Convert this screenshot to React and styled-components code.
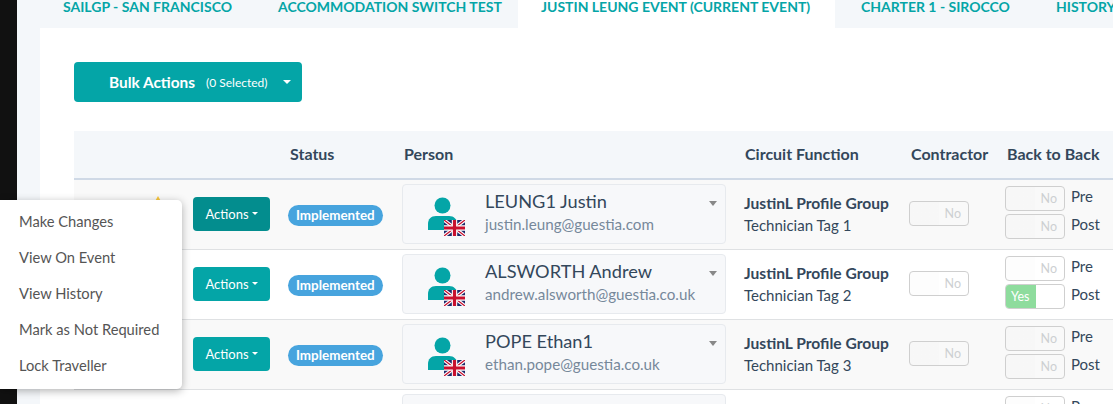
import React from "react";
import styled, { createGlobalStyle } from "styled-components";

const GlobalStyle = createGlobalStyle`
  html, body {
    margin: 0;
    height: 404px;
    overflow: hidden;
    background: #f4f7fa;
    font-family: "Lato", "Noto Sans", sans-serif;
  }
`;

const Page = styled.div`
  position: relative;
  display: flex;
  width: 1113px;
  height: 404px;
  overflow: hidden;
`;

const SideStrip = styled.div`
  flex: 0 0 17px;
  background: #111;
`;

const Main = styled.div`
  flex: 1;
  min-width: 0;
  background: #f4f7fa;
`;

const Tabs = styled.div`
  display: flex;
  height: 28px;
  padding-left: 25px;
  white-space: nowrap;
`;

const Tab = styled.div`
  flex: 0 0 ${(props) => props.$width}px;
  padding-left: ${(props) => props.$pad}px;
  box-sizing: border-box;
  background: ${(props) => (props.$active ? "#fff" : "transparent")};
  color: #04a5a7;
  font-size: 14px;
  font-weight: 700;
  line-height: 14px;
`;

const Panel = styled.div`
  margin-left: 23px;
  height: 376px;
  background: #fff;
  padding: 34px 0 0 34px;
  box-sizing: border-box;
`;

const BulkButton = styled.div`
  display: flex;
  align-items: center;
  width: 228px;
  height: 40px;
  box-sizing: border-box;
  padding-left: 35px;
  border-radius: 4px;
  background: #04a5a7;
  color: #fff;
`;

const BulkLabel = styled.span`
  font-size: 15.4px;
  font-weight: 700;
`;

const BulkCount = styled.span`
  margin-left: 11px;
  font-size: 12px;
`;

const BulkCaret = styled.span`
  margin-left: 15px;
  width: 0;
  height: 0;
  border-left: 4px solid transparent;
  border-right: 4px solid transparent;
  border-top: 4px solid #fff;
`;

const Table = styled.div`
  margin-top: 29px;
  width: 1039px;
`;

const Columns = styled.div`
  display: grid;
  grid-template-columns: 206px 114px 341px 165px 97px 116px;
  align-items: center;
`;

const HeadRow = styled(Columns)`
  height: 47px;
  background: #f4f7fa;
  border-bottom: 2px solid #cfd9e6;
  color: #33475b;
  font-size: 16px;
  font-weight: 700;
`;

const HeadCell = styled.div`
  padding: 0 0 2px ${(props) => props.$pad || 10}px;
  white-space: nowrap;
`;

const Row = styled(Columns)`
  height: 69px;
  background: ${(props) => (props.$shaded ? "#f9f9f9" : "#fff")};
  border-bottom: 1px solid #dfe1e3;
`;

const ActionCell = styled.div`
  position: relative;
  display: flex;
  justify-content: flex-end;
  margin-bottom: 2px;
`;

const WarnMark = styled.span`
  position: absolute;
  left: 79px;
  top: -1px;
  width: 0;
  height: 0;
  border-left: 5px solid transparent;
  border-right: 5px solid transparent;
  border-bottom: 9px solid #f9c73c;
`;

const ActionButton = styled.div`
  display: flex;
  align-items: center;
  justify-content: center;
  gap: 3px;
  width: 77px;
  height: 34px;
  margin-right: 10px;
  border-radius: 4px;
  background: ${(props) => (props.$open ? "#038d8e" : "#04a5a7")};
  color: #fff;
  font-size: 13px;
`;

const SmallCaret = styled.span`
  width: 0;
  height: 0;
  border-left: 3.5px solid transparent;
  border-right: 3.5px solid transparent;
  border-top: 3.5px solid #fff;
`;

const StatusCell = styled.div`
  padding-left: 8px;
`;

const Badge = styled.span`
  display: inline-block;
  padding: 0 8px;
  height: 21px;
  line-height: 21px;
  border-radius: 11px;
  background: #47a4de;
  color: #fff;
  font-size: 13.4px;
  font-weight: 700;
`;

const PersonCard = styled.div`
  position: relative;
  display: flex;
  align-items: center;
  box-sizing: border-box;
  width: 324px;
  height: 60px;
  margin: 0 0 1px 8px;
  padding-left: 25px;
  border: 1px solid #e7eaee;
  border-radius: 4px;
  background: #f7f8fa;
`;

const Avatar = styled.svg`
  flex: 0 0 37px;
  margin-top: 6px;
`;

const PersonText = styled.div`
  margin: 0 0 5px 20px;
`;

const PersonName = styled.div`
  color: #33475b;
  font-size: 18.2px;
  line-height: 24px;
`;

const PersonEmail = styled.div`
  color: #76889a;
  font-size: 15.2px;
  line-height: 22px;
`;

const CardCaret = styled.span`
  position: absolute;
  right: 8px;
  top: 16px;
  width: 0;
  height: 0;
  border-left: 4px solid transparent;
  border-right: 4px solid transparent;
  border-top: 5px solid #888;
`;

const CircuitCell = styled.div`
  padding: 0 0 2px 9px;
  color: #33475b;
`;

const CircuitGroup = styled.div`
  font-size: 15.6px;
  font-weight: 700;
  line-height: 22px;
  white-space: nowrap;
`;

const CircuitTag = styled.div`
  font-size: 15px;
  line-height: 22px;
`;

const ToggleBox = styled.div`
  display: flex;
  align-items: center;
  overflow: hidden;
  box-sizing: border-box;
  width: 60px;
  height: 25px;
  border: 1px solid #cfcfcf;
  border-radius: 4px;
  background: linear-gradient(90deg, rgba(0, 0, 0, 0.006) 50%, transparent 50%);
  font-size: 12.5px;
`;

const ToggleOn = styled.span`
  flex: 0 0 30px;
  height: 100%;
  line-height: 23px;
  padding-left: 5px;
  box-sizing: border-box;
  background: #8edc9d;
  color: #fff;
`;

const ToggleOff = styled.span`
  flex: 1;
  padding-right: 7px;
  text-align: right;
  color: #cdd0d2;
`;

const ContractorCell = styled.div`
  padding: 0 0 2px 9px;
`;

const BackCell = styled.div`
  display: flex;
  flex-direction: column;
  gap: 3px;
  padding: 0 0 4px 8px;
`;

const BackLine = styled.div`
  display: flex;
  align-items: center;
  gap: 6px;
  color: #33475b;
`;

const BackLabel = styled.span`
  margin-bottom: 6px;
  font-size: 15px;
`;

const Menu = styled.div`
  position: absolute;
  left: 0;
  top: 200px;
  width: 182px;
  height: 189px;
  box-sizing: border-box;
  padding-top: 3px;
  border-radius: 0 5px 5px 0;
  background: #fff;
  box-shadow: 0 2px 8px rgba(0, 0, 0, 0.3);
`;

const MenuItem = styled.div`
  height: 36px;
  line-height: 36px;
  padding-left: 19px;
  color: #555;
  font-size: 14.7px;
`;

function PersonIcon() {
  return (
    <Avatar width="37" height="40" viewBox="0 0 37 40">
      <circle cx="14.5" cy="8.5" r="8" fill="#04a5a7" />
      <path d="M0 33v-6c0-5 3-8 8-8h13c5 0 8 3 8 8v6z" fill="#04a5a7" />
      <svg x="16" y="23" width="21" height="16" viewBox="0 0 21 16">
        <rect width="21" height="16" fill="#1b2a6b" />
        <path d="M0 0l21 16M21 0L0 16" stroke="#fff" strokeWidth="3.4" />
        <path d="M0 0l21 16M21 0L0 16" stroke="#c8102e" strokeWidth="1.3" />
        <path d="M10.5 0v16M0 8h21" stroke="#fff" strokeWidth="5.4" />
        <path d="M10.5 0v16M0 8h21" stroke="#c8102e" strokeWidth="3.2" />
      </svg>
    </Avatar>
  );
}

function Toggle({ on }) {
  return (
    <ToggleBox>
      {on ? <ToggleOn>Yes</ToggleOn> : null}
      <ToggleOff>{on ? "" : "No"}</ToggleOff>
    </ToggleBox>
  );
}

const people = [
  { name: "LEUNG1 Justin", email: "justin.leung@guestia.com", tag: "Technician Tag 1", open: true },
  { name: "ALSWORTH Andrew", email: "andrew.alsworth@guestia.co.uk", tag: "Technician Tag 2", postOn: true },
  { name: "POPE Ethan1", email: "ethan.pope@guestia.co.uk", tag: "Technician Tag 3" },
  { name: "", email: "", tag: "", blank: true },
];

const menuItems = ["Make Changes", "View On Event", "View History", "Mark as Not Required", "Lock Traveller"];

function App() {
  return (
    <Page>
      <GlobalStyle />
      <SideStrip />
      <Main>
        <Tabs>
          <Tab $width={215} $pad={21}>SAILGP - SAN FRANCISCO</Tab>
          <Tab $width={261} $pad={21}>ACCOMMODATION SWITCH TEST</Tab>
          <Tab $active $width={317} $pad={23}>JUSTIN LEUNG EVENT (CURRENT EVENT)</Tab>
          <Tab $width={200} $pad={26}>CHARTER 1 - SIROCCO</Tab>
          <Tab $width={100} $pad={21}>HISTORY</Tab>
        </Tabs>
        <Panel>
          <BulkButton>
            <BulkLabel>Bulk Actions</BulkLabel>
            <BulkCount>(0 Selected)</BulkCount>
            <BulkCaret />
          </BulkButton>
          <Table>
            <HeadRow>
              <HeadCell />
              <HeadCell>Status</HeadCell>
              <HeadCell>Person</HeadCell>
              <HeadCell>Circuit Function</HeadCell>
              <HeadCell $pad={11}>Contractor</HeadCell>
              <HeadCell>Back to Back</HeadCell>
            </HeadRow>
            {people.map((person, idx) => (
              <Row key={idx} $shaded={idx % 2 === 0}>
                <ActionCell>
                  {person.open ? <WarnMark /> : null}
                  {person.blank ? null : (
                    <ActionButton $open={person.open}>
                      Actions <SmallCaret />
                    </ActionButton>
                  )}
                </ActionCell>
                <StatusCell>{person.blank ? null : <Badge>Implemented</Badge>}</StatusCell>
                <PersonCard>
                  {person.blank ? null : <PersonIcon />}
                  <PersonText>
                    <PersonName>{person.name}</PersonName>
                    <PersonEmail>{person.email}</PersonEmail>
                  </PersonText>
                  {person.blank ? null : <CardCaret />}
                </PersonCard>
                <CircuitCell>
                  {person.blank ? null : (
                    <>
                      <CircuitGroup>JustinL Profile Group</CircuitGroup>
                      <CircuitTag>{person.tag}</CircuitTag>
                    </>
                  )}
                </CircuitCell>
                <ContractorCell>{person.blank ? null : <Toggle />}</ContractorCell>
                <BackCell>
                  <BackLine>
                    <Toggle /> <BackLabel>Pre</BackLabel>
                  </BackLine>
                  <BackLine>
                    <Toggle on={person.postOn} /> <BackLabel>Post</BackLabel>
                  </BackLine>
                </BackCell>
              </Row>
            ))}
          </Table>
        </Panel>
      </Main>
      <Menu>
        {menuItems.map((item) => (
          <MenuItem key={item}>{item}</MenuItem>
        ))}
      </Menu>
    </Page>
  );
}

export default App;
